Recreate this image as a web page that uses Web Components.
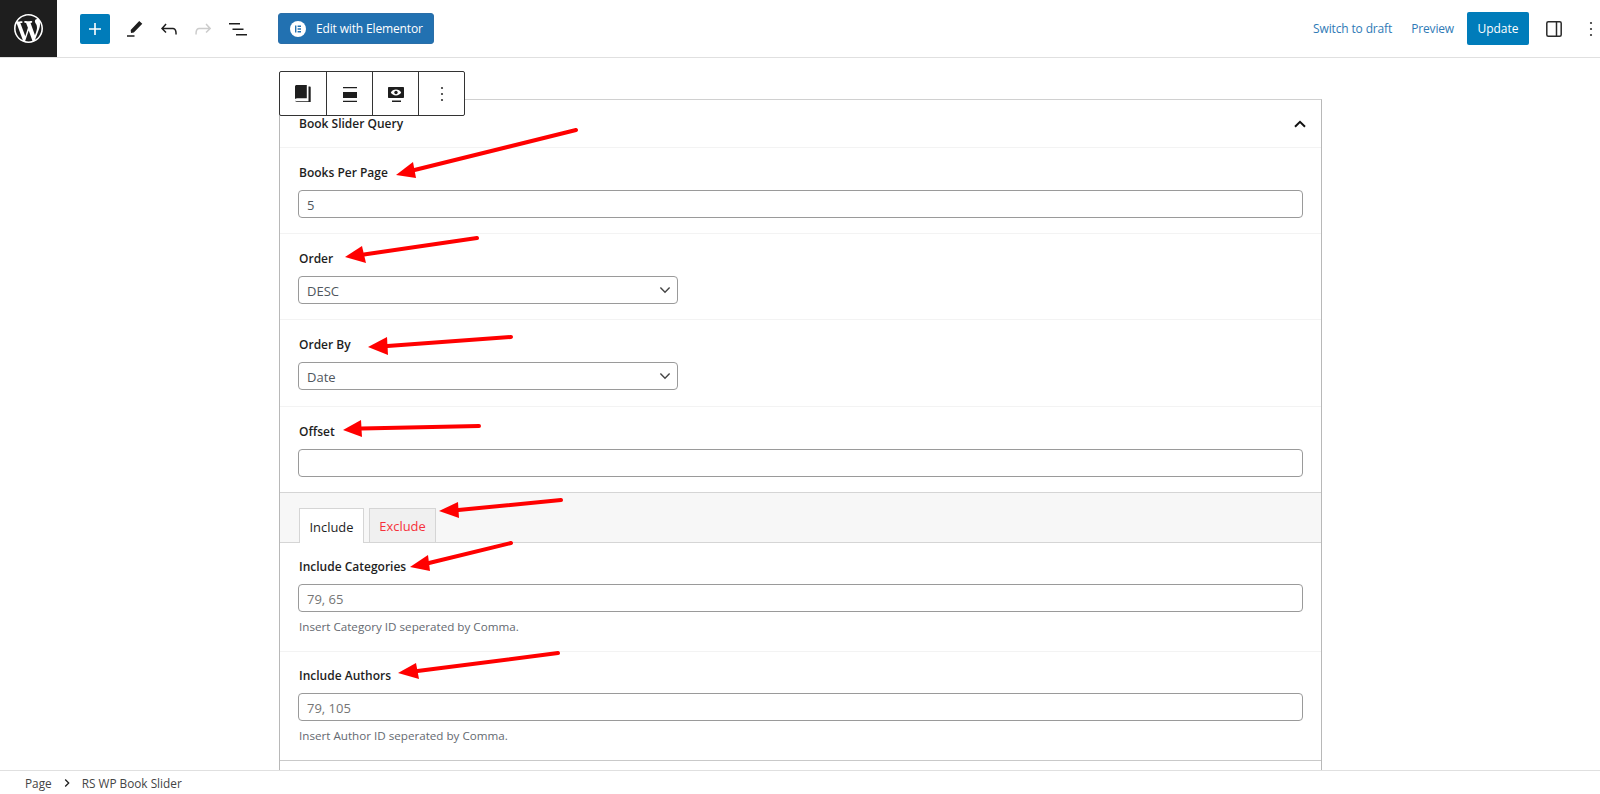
<!DOCTYPE html>
<html lang="en">
<head>
<meta charset="utf-8">
<title>RS WP Book Slider</title>
<style>
  html, body { margin: 0; height: 100%; background: #fff; }
  body { font-family: "Open Sans", "Noto Sans", sans-serif; font-size: 12px; color: #1e1e1e; overflow: hidden; }
</style>
</head>
<body>
<wp-editor>
  <wp-topbar slot="top"></wp-topbar>

  <wp-block-toolbar></wp-block-toolbar>

  <rs-panel title="Book Slider Query">
    <rs-field label="Books Per Page" value="5"></rs-field>
    <rs-field label="Order" value="DESC" type="select"></rs-field>
    <rs-field label="Order By" value="Date" type="select" style="--pb: 16px"></rs-field>
    <rs-field label="Offset" style="--pb: 15px; --bb: 0"></rs-field>
    <rs-tabs></rs-tabs>
    <rs-field label="Include Categories" placeholder="79, 65" help="Insert Category ID seperated by Comma." style="--pt: 15px"></rs-field>
    <rs-field label="Include Authors" placeholder="79, 105" help="Insert Author ID seperated by Comma." style="--pt: 15px; --pb: 15px; --bb: 0"></rs-field>
  </rs-panel>

  <red-arrows></red-arrows>

  <wp-footer slot="bottom"></wp-footer>
</wp-editor>

<script>
class WpEditor extends HTMLElement {
  constructor() {
    super();
    this.attachShadow({ mode: "open" }).innerHTML = `
      <style>
        :host { display: flex; flex-direction: column; height: 794px; position: relative; overflow: hidden; }
        main { flex: 1; position: relative; overflow: hidden; min-height: 0; }
      </style>
      <slot name="top"></slot>
      <main><slot></slot></main>
      <slot name="bottom"></slot>
    `;
  }
}

class WpTopbar extends HTMLElement {
  constructor() {
    super();
    this.attachShadow({ mode: "open" }).innerHTML = `
      <style>
        :host { display: flex; align-items: center; height: 57px; border-bottom: 1px solid #e0e0e0; background: #fff; flex: none; }
        svg { display: block; flex: none; }
        .logo { width: 57px; height: 57px; background: #1e1e1e; display: flex; align-items: center; justify-content: center; flex: none; }
        .add { width: 30px; height: 30px; margin-left: 23px; background: #007cba; border-radius: 2px; display: flex; align-items: center; justify-content: center; }
        .pen { margin-left: 12px; }
        .undo { margin-left: 11px; }
        .redo { margin-left: 10px; }
        .list { margin-left: 11px; }
        .elementor { margin-left: 28px; width: 156px; height: 31px; box-sizing: border-box; background: #2271b1; border: 1px solid #2a6ea8; border-radius: 3px; color: #fff; font-size: 12px; letter-spacing: -0.15px; display: flex; align-items: center; gap: 10px; padding-left: 11px; }
        .right { margin-left: auto; display: flex; align-items: center; }
        .link { color: #2f7ab6; font-size: 12px; letter-spacing: -0.15px; }
        .preview { margin-left: 19px; }
        .update { margin-left: 13px; width: 62px; height: 33px; background: #007cba; color: #fff; font-size: 12px; border-radius: 2px; display: flex; align-items: center; justify-content: center; }
        .side { margin-left: 13px; }
        .more { margin-left: 13px; margin-right: -3px; }
      </style>
      <div class="logo">
        <svg width="29" height="29" viewBox="0 0 20 20" fill="#fff"><path d="M20 10c0-5.51-4.49-10-10-10C4.48 0 0 4.49 0 10c0 5.52 4.48 10 10 10 5.51 0 10-4.48 10-10zM7.78 15.37L4.37 6.22c.55-.02 1.17-.08 1.17-.08.5-.06.44-1.13-.06-1.11 0 0-1.45.11-2.37.11-.18 0-.37 0-.58-.01C4.12 2.69 6.87 1.11 10 1.11c2.33 0 4.45.87 6.05 2.34-.68-.11-1.65.39-1.65 1.58 0 .74.45 1.36.9 2.1.35.61.55 1.36.55 2.46 0 1.49-1.4 5-1.4 5l-3.03-8.37c.54-.02.82-.17.82-.17.5-.05.44-1.25-.06-1.22 0 0-1.44.12-2.38.12-.87 0-2.33-.12-2.33-.12-.5-.03-.56 1.2-.06 1.22l.92.08 1.26 3.41zM17.41 10c.24-.64.74-1.87.43-4.25.7 1.29 1.05 2.71 1.05 4.25 0 3.29-1.73 6.24-4.4 7.78.97-2.59 1.94-5.2 2.92-7.78zM6.1 18.09C3.12 16.65 1.11 13.53 1.11 10c0-1.3.23-2.48.72-3.59C3.25 10.3 4.67 14.2 6.1 18.09zm4.03-6.63l2.58 6.98c-.86.29-1.76.45-2.71.45-.79 0-1.57-.11-2.29-.33.81-2.38 1.62-4.74 2.42-7.1z"/></svg>
      </div>
      <div class="add">
        <svg width="24" height="24" viewBox="0 0 24 24" fill="#fff"><path d="M18 11.2h-5.2V6h-1.6v5.2H6v1.6h5.2V18h1.6v-5.2H18z"/></svg>
      </div>
      <svg class="pen" width="24" height="24" viewBox="0 0 24 24" fill="#1e1e1e"><path d="M5 18.2h7.5v1.5H5zM9 15.9l-.3-2.9 8.5-9.1 3.1 2.8-8.5 8.9z"/></svg>
      <svg class="undo" width="24" height="24" viewBox="0 0 24 24" fill="#1e1e1e"><path d="M18.3 11.7c-.6-.6-1.4-.9-2.3-.9H6.7l2.9-3.3-1.1-1-4.5 5L8.5 16l1-1-2.7-2.7H16c.5 0 .9.2 1.3.5 1 1 1 3.4 1 4.5v.3h1.5v-.2c0-1.5 0-4.3-1.5-5.7z"/></svg>
      <svg class="redo" width="24" height="24" viewBox="0 0 24 24" fill="#ccc"><path d="M15.6 6.5l-1.1 1 2.9 3.3H8c-.9 0-1.7.3-2.3.9-1.4 1.5-1.4 4.2-1.4 5.7v.2h1.5v-.3c0-1.1 0-3.5 1-4.5.3-.3.7-.5 1.3-.5h9.2L14.5 15l1.1 1.1 4.6-4.6-4.6-5z"/></svg>
      <svg class="list" width="24" height="24" viewBox="0 0 24 24" fill="#1e1e1e"><path d="M3 6h11v1.5H3V6m3.5 5.5h11V13h-11v-1.5M10 17h11v1.5H10V17z"/></svg>
      <div class="elementor">
        <svg width="16" height="16" viewBox="0 0 16 16"><circle cx="8" cy="8" r="8" fill="#fff"/><path d="M5 4.5h1.4v7H5zM7.6 4.5H11v1.4H7.6zM7.6 7.3H11v1.4H7.6zM7.6 10.1H11v1.4H7.6z" fill="#2271b1"/></svg>
        <span>Edit with Elementor</span>
      </div>
      <div class="right">
        <span class="link">Switch to draft</span>
        <span class="link preview">Preview</span>
        <span class="update">Update</span>
        <svg class="side" width="24" height="24" viewBox="0 0 24 24" fill="none" stroke="#2a2a2a" stroke-width="1.5"><rect x="4.8" y="4.8" width="14.4" height="14.4" rx="1.5"/><path d="M14.5 5v14"/></svg>
        <svg class="more" width="24" height="24" viewBox="0 0 24 24" fill="#333"><circle cx="12" cy="6" r="1.1"/><circle cx="12" cy="12" r="1.1"/><circle cx="12" cy="18" r="1.1"/></svg>
      </div>
    `;
  }
}

class WpBlockToolbar extends HTMLElement {
  constructor() {
    super();
    this.attachShadow({ mode: "open" }).innerHTML = `
      <style>
        :host { position: absolute; left: 279px; top: 13px; z-index: 2; display: flex; height: 45px; box-sizing: border-box; background: #fff; border: 1px solid #333; border-radius: 2px; }
        div { width: 46px; box-sizing: border-box; display: flex; align-items: center; justify-content: center; }
        div + div { border-left: 1px solid #333; }
        svg { display: block; }
      </style>
      <div>
        <svg width="24" height="24" viewBox="0 0 24 24" fill="#1e1e1e"><path d="M5.6 3h10.2v13.3H6.2c-.9 0-1.6.2-2.2.6V4.6C4 3.7 4.7 3 5.6 3z"/><path d="M17.5 4.6h1.2c.6 0 1 .4 1 1V20H6.4C5 20 4 19.2 4 18.4c.3.5 1.2.9 2.4.9h11.1z"/></svg>
      </div>
      <div>
        <svg width="24" height="24" viewBox="0 0 24 24" fill="#1e1e1e"><path d="M5 5h14v1.2H5zM5 10h14v6H5zM5 18.8h14V20H5z"/></svg>
      </div>
      <div>
        <svg width="24" height="24" viewBox="0 0 24 24"><path fill="#1e1e1e" d="M5 5h14c.6 0 1 .4 1 1v9c0 .6-.4 1-1 1H5c-.6 0-1-.4-1-1V6c0-.6.4-1 1-1zM8 18.6h9V20H8z"/><path fill="#fff" d="M12 7.6c2.3 0 4.2 1.2 5.2 2.9-1 1.7-2.9 2.9-5.2 2.9s-4.2-1.2-5.2-2.9c1-1.7 2.9-2.9 5.2-2.9z"/><circle cx="12" cy="10.5" r="1.7" fill="#1e1e1e"/></svg>
      </div>
      <div>
        <svg width="24" height="24" viewBox="0 0 24 24" fill="#333"><circle cx="12" cy="6" r="1.1"/><circle cx="12" cy="12" r="1.1"/><circle cx="12" cy="18" r="1.1"/></svg>
      </div>
    `;
  }
}

class RsPanel extends HTMLElement {
  constructor() {
    super();
    this.attachShadow({ mode: "open" }).innerHTML = `
      <style>
        :host { display: block; width: 1043px; box-sizing: border-box; margin: 41px 0 0 279px; border: 1px solid #b8b8b8; border-top-color: #d0d0d0; border-bottom: 0; min-height: 700px; }
        header { height: 47px; border-bottom: 1px solid #f3f3f3; display: flex; align-items: center; justify-content: space-between; padding: 0 15px 0 19px; font-weight: 600; }
        svg { display: block; }
        section { border-bottom: 1px solid #c9c9c9; }
      </style>
      <header>
        <span id="title"></span>
        <svg width="12" height="8" viewBox="0 0 12 8" fill="none" stroke="#111" stroke-width="2"><path d="M1 6.8l5-5 5 5"/></svg>
      </header>
      <section><slot></slot></section>
    `;
    this.shadowRoot.getElementById("title").textContent = this.getAttribute("title");
  }
}

class RsField extends HTMLElement {
  constructor() {
    super();
    const isSelect = this.getAttribute("type") === "select";
    const value = this.getAttribute("value") || "";
    const placeholder = this.getAttribute("placeholder") || "";
    const help = this.getAttribute("help");
    this.attachShadow({ mode: "open" }).innerHTML = `
      <style>
        :host { display: block; padding: var(--pt, 16px) 18px var(--pb, 15px) 19px; border-bottom: var(--bb, 1px) solid #f3f3f3; }
        label { display: block; font-weight: 600; line-height: 18px; margin-bottom: 8px; }
        .box { height: 28px; box-sizing: border-box; margin-left: -1px; border: 1px solid #9a9a9a; border-radius: 4px; padding: 1px 8px 0; display: flex; align-items: center; justify-content: space-between; color: #50575e; font-size: 13px; line-height: 18px; background: #fff; }
        .box.select { width: 380px; padding-right: 6px; }
        .ph { color: #757575; }
        svg { display: block; margin-top: -1px; }
        p { margin: 6px 0 0; color: #646970; font-size: 11.65px; line-height: 18px; }
      </style>
      <label></label>
      <div class="box ${isSelect ? "select" : ""}">
        <span class="${placeholder ? "ph" : ""}"></span>
        ${isSelect ? `<svg width="12" height="8" viewBox="0 0 12 8" fill="none" stroke="#444" stroke-width="1.4"><path d="M1.4 1.6l4.6 4.6 4.6-4.6"/></svg>` : ""}
      </div>
      ${help ? "<p></p>" : ""}
    `;
    this.shadowRoot.querySelector("label").textContent = this.getAttribute("label");
    this.shadowRoot.querySelector(".box span").textContent = value || placeholder;
    if (help) this.shadowRoot.querySelector("p").textContent = help;
  }
}

class RsTabs extends HTMLElement {
  constructor() {
    super();
    this.attachShadow({ mode: "open" }).innerHTML = `
      <style>
        :host { display: flex; gap: 5px; height: 49px; padding: 0 0 0 19px; align-items: flex-end; background: #f7f7f7; border-top: 1px solid #d5d5d5; border-bottom: 1px solid #d5d5d5; font-size: 12.9px; }
        div { height: 34px; box-sizing: border-box; padding-top: 1px; border: 1px solid #d5d5d5; border-bottom: 0; display: flex; align-items: center; justify-content: center; }
        .on { width: 65px; background: #fff; color: #1e1e1e; height: 35px; margin-bottom: -1px; }
        .off { width: 67px; background: #f0f0f0; color: #f6303a; }
      </style>
      <div class="on">Include</div>
      <div class="off">Exclude</div>
    `;
  }
}

class WpFooter extends HTMLElement {
  constructor() {
    super();
    this.attachShadow({ mode: "open" }).innerHTML = `
      <style>
        :host { display: flex; align-items: center; height: 23px; flex: none; border-top: 1px solid #e0e0e0; background: #fff; padding-left: 25px; color: #444; font-size: 11.8px; }
        svg { display: block; margin: 0 12px 0 12px; }
      </style>
      <span>Page</span>
      <svg width="6" height="10" viewBox="0 0 6 10" fill="none" stroke="#1e1e1e" stroke-width="1.3"><path d="M1.2 1.5l3.5 3.5-3.5 3.5"/></svg>
      <span>RS WP Book Slider</span>
    `;
  }
}

// annotation arrows sit over the form, coordinates are page pixels
const ARROWS = [
  { tail: [576, 130], tip: [396, 175], a: [413, 162], b: [416, 178] },
  { tail: [477, 238], tip: [345, 257], a: [362, 246], b: [366, 263] },
  { tail: [511, 337], tip: [368, 347], a: [387, 337], b: [388, 355] },
  { tail: [479, 426], tip: [343, 430], a: [361, 420], b: [362, 437] },
  { tail: [561, 500], tip: [439, 511], a: [458, 502], b: [459, 518] },
  { tail: [511, 543], tip: [410, 567], a: [428, 555], b: [430, 571] },
  { tail: [558, 653], tip: [398, 673], a: [416, 663], b: [419, 679] },
];

class RedArrows extends HTMLElement {
  constructor() {
    super();
    const shapes = ARROWS.map(({ tail, tip, a, b }) => {
      const base = [(a[0] + b[0]) / 2, (a[1] + b[1]) / 2];
      return `<path d="M${tail} L${base}" stroke="#f00" stroke-width="4" stroke-linecap="round"/>
        <polygon points="${tip} ${a} ${b}" fill="#f00"/>`;
    }).join("");
    this.attachShadow({ mode: "open" }).innerHTML = `
      <style>
        :host { position: absolute; left: 0; top: -58px; width: 1600px; height: 794px; z-index: 3; pointer-events: none; }
        svg { display: block; }
      </style>
      <svg width="1600" height="794" viewBox="0 0 1600 794">${shapes}</svg>
    `;
  }
}

customElements.define("wp-editor", WpEditor);
customElements.define("wp-topbar", WpTopbar);
customElements.define("wp-block-toolbar", WpBlockToolbar);
customElements.define("rs-panel", RsPanel);
customElements.define("rs-field", RsField);
customElements.define("rs-tabs", RsTabs);
customElements.define("wp-footer", WpFooter);
customElements.define("red-arrows", RedArrows);
</script>
</body>
</html>
